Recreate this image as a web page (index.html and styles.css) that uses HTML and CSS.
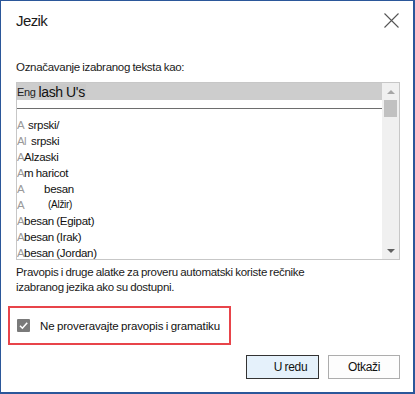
FILE: index.html
```html
<!DOCTYPE html>
<html lang="sr">
<head>
<meta charset="utf-8">
<title>Jezik</title>
<link rel="stylesheet" href="styles.css">
</head>
<body>
<div class="dialog">
  <header class="titlebar">
    <span class="title">Jezik</span>
    <span class="close" aria-label="Zatvori">
      <svg width="15" height="15" viewBox="0 0 15 15"><path d="M0.5 0.5 L14.5 14.5 M14.5 0.5 L0.5 14.5" stroke="#555" stroke-width="1.1" fill="none"/></svg>
    </span>
  </header>
  <div class="content">
    <p class="label">Označavanje izabranog teksta kao:</p>
    <div class="listbox">
      <div class="list">
        <div class="row selected"><span class="sm">Eng</span><span class="big">lash U's</span></div>
        <div class="sep"></div>
        <div class="row"><span class="a">A</span><span class="t p12">srpski/</span></div>
        <div class="row"><span class="a">Al</span><span class="t p9">srpski</span></div>
        <div class="row"><span class="a">A</span><span class="t">Alzaski</span></div>
        <div class="row"><span class="a">A</span><span class="t">m haricot</span></div>
        <div class="row"><span class="a">A</span><span class="t p28">besan</span></div>
        <div class="row"><span class="a">A</span><span class="t p32 small">(Alžir)</span></div>
        <div class="row"><span class="a">A</span><span class="t">besan (Egipat)</span></div>
        <div class="row"><span class="a">A</span><span class="t">besan (Irak)</span></div>
        <div class="row"><span class="a">A</span><span class="t">besan (Jordan)</span></div>
      </div>
      <div class="scrollbar">
        <span class="arrow up"></span>
        <span class="thumb"></span>
        <span class="track"></span>
        <span class="arrow down"></span>
      </div>
    </div>
    <p class="desc">Pravopis i druge alatke za proveru automatski koriste rečnike<br>izabranog jezika ako su dostupni.</p>
    <div class="highlight">
      <span class="checkbox">
        <svg width="13" height="13" viewBox="0 0 13 13"><path d="M3 6.8 L5.4 9.2 L10.2 3.8" stroke="#fff" stroke-width="1.6" fill="none"/></svg>
      </span>
      <span class="check-label">Ne proveravajte pravopis i gramatiku</span>
    </div>
    <div class="buttons">
      <span class="btn primary">U redu</span>
      <span class="btn">Otkaži</span>
    </div>
  </div>
</div>
</body>
</html>
```

FILE: styles.css
```css
* { box-sizing: border-box; }
html, body { margin: 0; padding: 0; background: #fff; }
body {
  font-family: "Liberation Sans", Arial, sans-serif;
  font-size: 11.5px;
  letter-spacing: -0.3px;
  word-spacing: -0.5px;
  color: #000;
}
.dialog {
  width: 415px;
  height: 394px;
  border-style: solid;
  border-color: #2b579a;
  border-width: 1px 2px 2px 1px;
  background: #fff;
}
.titlebar {
  height: 43px;
  display: flex;
  align-items: center;
  justify-content: space-between;
  padding: 0 14px 4px 15px;
}
.title { font-size: 15px; letter-spacing: -0.6px; color: #1a1a1a; }
.close { display: flex; width: 15px; height: 15px; }
.content {
  padding: 0 13px 0 15px;
}
.label {
  margin: 16px 0 0;
  line-height: 15px;
  color: #1a1a1a;
}
.listbox {
  margin-top: 7px;
  height: 178px;
  border: 1px solid #c7c7c7;
  display: flex;
  overflow: hidden;
}
.list {
  flex: 1;
  overflow: hidden;
}
.row {
  height: 16px;
  display: flex;
  align-items: center;
  white-space: nowrap;
  line-height: 16px;
}
.row.selected {
  height: 17px;
  background: #cdcdcd;
  align-items: flex-end;
}
.sm { font-size: 11px; letter-spacing: -0.4px; color: #222; line-height: 15px; }
.big { font-size: 14px; letter-spacing: -0.3px; margin-left: 3px; background: #c9c9c9; padding-right: 1px; line-height: 16px; color: #111; }
.sep {
  height: 1px;
  background: #6e6e6e;
  margin: 8px 0 8px;
}
.a { color: #9a9a9a; letter-spacing: -0.6px; }
.t { color: #111; }
.p12 { padding-left: 4px; }
.p9 { padding-left: 5px; }
.p28 { padding-left: 20px; }
.p32 { padding-left: 24px; }
.small { font-size: 10px; }
.scrollbar {
  width: 17px;
  background: #f0f0f0;
  display: flex;
  flex-direction: column;
  align-items: center;
}
.arrow {
  width: 0;
  height: 0;
  border-left: 4px solid transparent;
  border-right: 4px solid transparent;
}
.arrow.up {
  margin-top: 7px;
  border-bottom: 4px solid #a6a6a6;
}
.thumb {
  margin-top: 6px;
  width: 13px;
  height: 17px;
  background: #c1c1c1;
}
.track { flex: 1; }
.arrow.down {
  margin-bottom: 6px;
  border-top: 4px solid #606060;
}
.desc {
  margin: 5px 0 0;
  line-height: 15px;
  color: #1a1a1a;
}
.highlight {
  margin: 11px 0 0 -8px;
  width: 223px;
  height: 39px;
  border: 2px solid #e8444a;
  display: flex;
  align-items: center;
  padding-left: 7px;
}
.checkbox {
  width: 13px;
  height: 13px;
  background: #7a7a7a;
  border-radius: 1px;
  display: flex;
}
.check-label {
  margin-left: 10px;
  color: #111;
  white-space: nowrap;
  letter-spacing: -0.15px;
}
.buttons {
  margin-top: 10px;
  display: flex;
  justify-content: flex-end;
  gap: 9px;
}
.btn {
  width: 72px;
  height: 24px;
  border: 1px solid #adadad;
  background: #fdfdfd;
  display: flex;
  align-items: center;
  justify-content: center;
  color: #111;
  font-size: 12px;
}
.btn.primary {
  width: 73px;
  background: #e5f1fb;
  border-color: #333;
  padding-left: 16px;
}
```
